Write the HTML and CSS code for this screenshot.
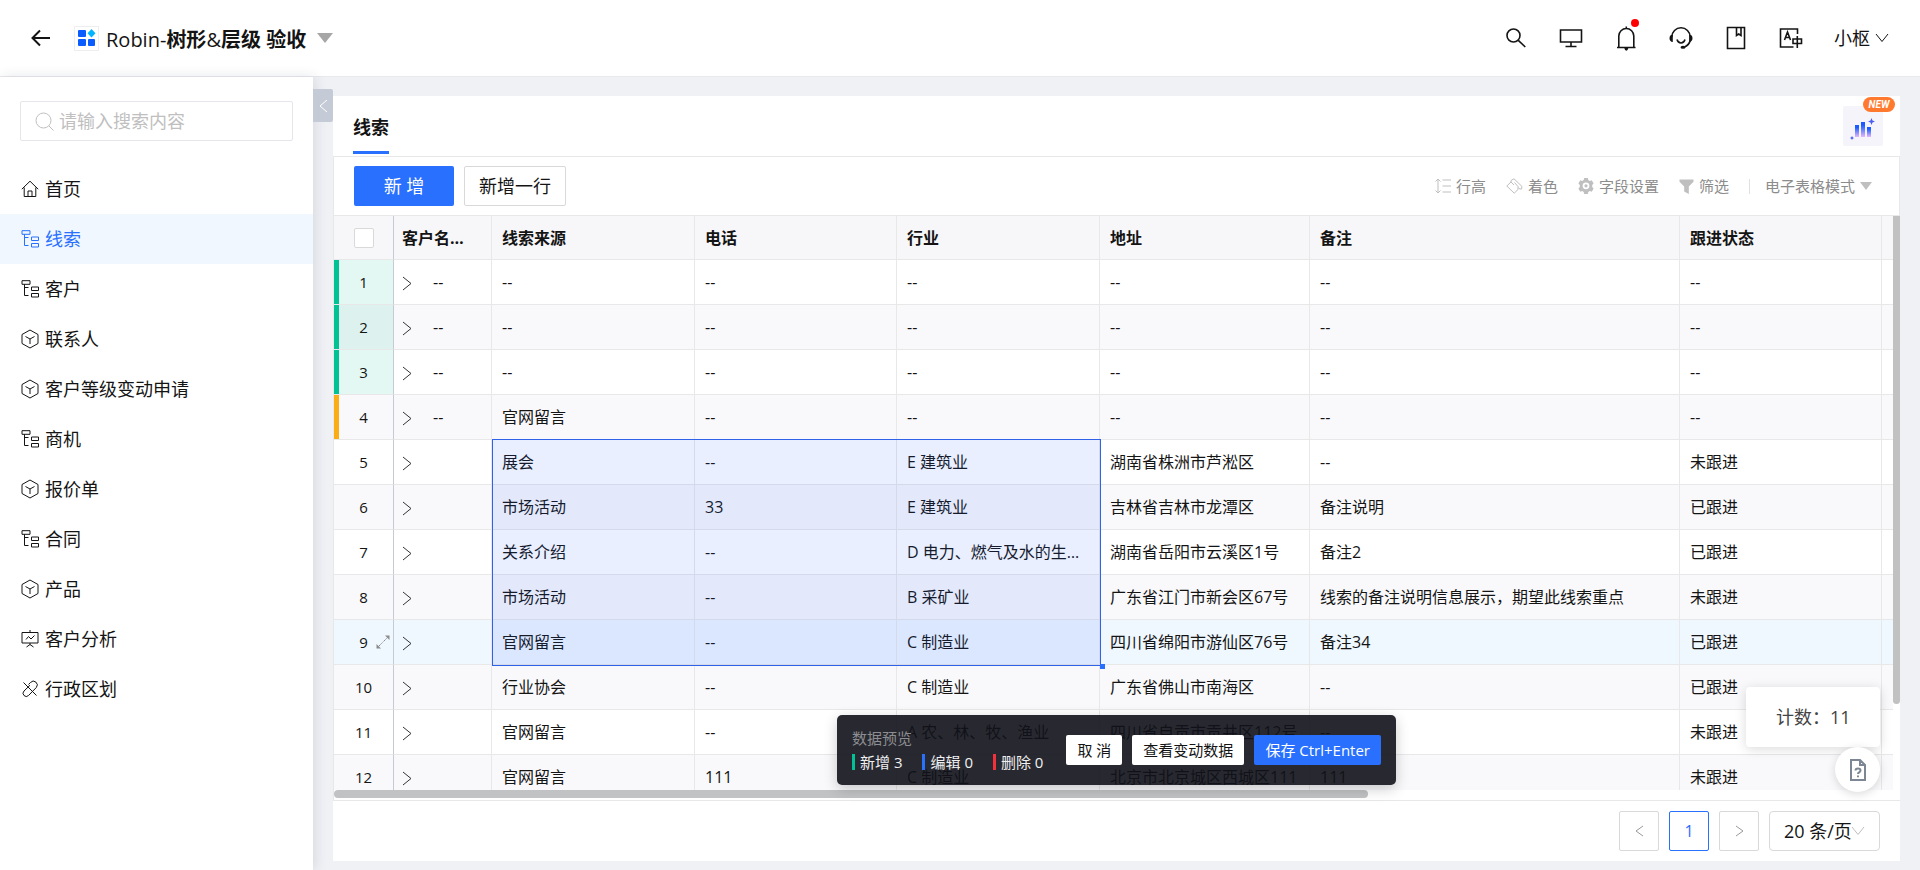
FILE: index.html
```html
<!DOCTYPE html>
<html lang="zh-CN">
<head>
    <meta charset="UTF-8">
    <meta name="viewport" content="width=device-width, initial-scale=1.0">
    <title>Robin-树形&amp;层级 验收</title>
    <link rel="stylesheet" href="styles.css">
</head>
<body>
    <!-- 图标 -->
    <svg class="sprite" aria-hidden="true">
        <symbol id="i-home" viewBox="0 0 18 18"><path d="M.8 9.200 9 1.200l8.200 8M3.200 7.500v9h11.600v-9M7 16.500v-5.500h4v5.500"/></symbol>
        <symbol id="i-tree" viewBox="0 0 18 18"><path d="M1 .7h8v3.600H1zM3.500 4.300v11.200h4M3.500 7.500h4M10.500 7h7v3.500h-7zM10.500 13.500h7V17h-7z"/></symbol>
        <symbol id="i-box" viewBox="0 0 18 20"><path d="M9 1l8 4.500v9L9 19l-8-4.500v-9zM4.500 7.500 9 10l4.500-2.500M9 10v5"/></symbol>
        <symbol id="i-chart" viewBox="0 0 18 18"><path d="M9 0v2M1 2.500h16v10.500H1zM5 9.500l2.500-3 2.500 2.500 3.500-3.500M9 13v1.500M5.500 17l3.500-2.500 3.500 2.500"/></symbol>
        <symbol id="i-link" viewBox="0 0 18 18"><path d="M2.500 2.500l13 13M7.500 4.500l2-2a3.800 3.800 0 0 1 5.800 5L9 14M9 5.200 3 11a3 3 0 0 0 4.500 4.500l2.500-2.500"/></symbol>
        <symbol id="i-right" viewBox="0 0 10 15"><path d="M1 1l8 6.500L1 14"/></symbol>
        <symbol id="i-down" viewBox="0 0 14 10"><path d="M1 1l6 7.500L13 1"/></symbol>
    </svg>

    <header class="header">
        <button class="icon-btn back" aria-label="返回">
            <svg width="20" height="18" viewBox="0 0 20 18"><path stroke-width="2" d="M19 9H1.500M9 1.500 1.500 9 9 16.500"/></svg>
        </button>
        <span class="app-icon">
            <svg width="18" height="18" viewBox="0 0 18 18"><g fill="#0a5cff"><rect x="0" y="1" width="8" height="7" rx="1"/><rect x="0" y="10" width="8" height="7" rx="1"/><rect x="10" y="10" width="7" height="7" rx="1"/></g><path fill="#00b4ff" d="M13.500 0l4 4.200-4 4.200-4-4.200z"/></svg>
        </span>
        <h1 class="title"><span class="latin">Robin-</span>树形<span class="latin">&amp;</span>层级 验收</h1>
        <span class="caret caret-big"></span>

        <nav class="header-tools">
            <button class="icon-btn" aria-label="搜索"><svg width="24" height="24" viewBox="0 0 24 24"><circle class="thick" cx="9.500" cy="9.500" r="6.500"/><path class="thick" d="M14.300 14.300l7 6.700"/></svg></button>
            <button class="icon-btn" aria-label="桌面"><svg width="24" height="24" viewBox="0 0 24 24"><path class="thick" d="M1.500 4h21v12h-21zM12 16v4.500M6.500 20.500h11"/></svg></button>
            <button class="icon-btn bell" aria-label="通知"><svg width="24" height="26" viewBox="0 0 24 26"><path class="thick" d="M3 22.500h18.500M4.800 22v-11a7.500 7.500 0 0 1 15 0v11M12.300 1.500v2"/><path class="solid" d="M10.300 23h4q-.5 2.700-2 2.700t-2-2.700z"/></svg><i class="dot"></i></button>
            <button class="icon-btn" aria-label="客服"><svg width="24" height="24" viewBox="0 0 24 24"><path class="thick" d="M2.800 11a9.200 9.200 0 0 1 18.400 0v3q-.8 5-5.700 7M8 13.500q1 3.500 4 3.500t4-3.500"/><path class="solid" d="M3.800 8.500v7.500Q.5 15.500.5 12.200t3.300-3.700zM20.200 8.500v7.500q3.300-.5 3.300-3.800t-3.300-3.700z"/><ellipse class="solid" cx="14" cy="21.300" rx="2.500" ry="1.500"/></svg></button>
            <button class="icon-btn" aria-label="文档"><svg width="24" height="24" viewBox="0 0 24 24"><path class="thick" d="M3.500 1.500h17v21h-17zM12.500 2v7.500l2.200-1.500 2.300 1.500V2"/></svg></button>
            <button class="icon-btn" aria-label="语言"><svg width="24" height="24" viewBox="0 0 24 24"><path class="thick" d="M18.500 8V3h-17v18h13M5.500 14 8.500 6l3 8M6.500 11.500h4M14 13h8.500v4.500H14zM18.300 10V22"/></svg></button>
            <button class="user">小枢<svg width="14" height="10"><use href="#i-down"/></svg></button>
        </nav>
    </header>

    <div class="body">
        <aside class="sidebar">
            <label class="search">
                <svg width="19" height="19" viewBox="0 0 19 19"><circle cx="8.500" cy="8.500" r="7.500"/><path d="M14 14l4.500 4.500"/></svg>
                <input type="text" placeholder="请输入搜索内容" aria-label="搜索菜单">
            </label>
            <nav class="menu">
                <a href="#"><svg><use href="#i-home"/></svg>首页</a>
                <a href="#" class="active"><svg><use href="#i-tree"/></svg>线索</a>
                <a href="#"><svg><use href="#i-tree"/></svg>客户</a>
                <a href="#"><svg><use href="#i-box"/></svg>联系人</a>
                <a href="#"><svg><use href="#i-box"/></svg>客户等级变动申请</a>
                <a href="#"><svg><use href="#i-tree"/></svg>商机</a>
                <a href="#"><svg><use href="#i-box"/></svg>报价单</a>
                <a href="#"><svg><use href="#i-tree"/></svg>合同</a>
                <a href="#"><svg><use href="#i-box"/></svg>产品</a>
                <a href="#"><svg><use href="#i-chart"/></svg>客户分析</a>
                <a href="#"><svg><use href="#i-link"/></svg>行政区划</a>
            </nav>
            <button class="collapse" aria-label="收起菜单"><svg width="9" height="14" viewBox="0 0 9 14"><path d="M8 1 1 7l7 6"/></svg></button>
        </aside>

        <main class="panel">
            <div class="tabs">
                <a href="#" class="tab">线索</a>
                <button class="ai-btn" aria-label="智能分析">
                    <svg width="26" height="26" viewBox="1 -3 26 26">
                        <defs><linearGradient id="ai" x1="0" y1="0" x2="0" y2="1"><stop offset="0.200" stop-color="#1a5cff"/><stop offset="1" stop-color="#e4b8fa"/></linearGradient></defs>
                        <g fill="url(#ai)"><rect x="6" y="9" width="4" height="12"/><rect x="12" y="6" width="4" height="15"/><rect x="18" y="11" width="4" height="10"/></g>
                        <path fill="#4a5ef5" d="M22.500 2l1 2.500 2.500 1-2.500 1-1 2.500-1-2.500-2.500-1 2.500-1zM3 20l.7 1.300 1.300.7-1.300.7L3 24l-.7-1.300L1 22l1.300-.7z"/>
                    </svg>
                    <span class="badge">NEW</span>
                </button>
            </div>

            <div class="toolbar">
                <button class="btn primary">新 增</button>
                <button class="btn">新增一行</button>
                <div class="tools">
                    <button class="tool"><svg width="16" height="16" viewBox="0 0 16 16"><path d="M3 1v14M.5 3.500 3 1l2.500 2.500M.5 12.500 3 15l2.500-2.500M7.500 2h8.500M7.500 8h8.500M7.500 14h8.500"/></svg>行高</button>
                    <button class="tool"><svg width="17" height="16" viewBox="0 0 17 16"><path d="M5 4V2.500L8 .8l8 7.700-.5 2.500h-2l-1-1.500M5 4 .8 8l7.400 7.200L12 11.500V8.500L8.500 4.500M5 4l3 3"/></svg>着色</button>
                    <button class="tool"><svg width="16" height="16" viewBox="0 0 16 16"><path class="solid" fill-rule="evenodd" d="M6.200 0h3.600l.5 2 1.500.9 2-.6 1.800 3.100-1.400 1.500v2.200l1.400 1.500-1.800 3.100-2-.6-1.500.9-.5 2H6.200l-.5-2-1.500-.9-2 .6L.4 10.600l1.400-1.500V6.900L.4 5.400l1.800-3.100 2 .6 1.500-.9zM8 4.400a3.400 3.400 0 1 0 0 6.800 3.400 3.400 0 0 0 0-6.800z"/><circle class="solid" cx="8" cy="7.800" r="1.600"/></svg>字段设置</button>
                    <button class="tool"><svg width="15" height="15" viewBox="0 0 15 15"><path class="solid" d="M.5.5h14v2.200L9.800 7.500V15l-4.600-2.500v-5L.5 2.700z"/></svg>筛选</button>
                    <span class="divider"></span>
                    <button class="tool">电子表格模式<span class="caret"></span></button>
                </div>
            </div>

            <div class="grid">
                <div class="viewport">
                    <table>
                        <colgroup>
                            <col class="c-index"><col class="c-name"><col class="c-source"><col class="c-phone"><col class="c-source"><col class="c-address"><col><col class="c-phone"><col class="c-rest">
                        </colgroup>
                        <thead>
                            <tr><th><input type="checkbox" aria-label="全选"></th><th>客户名称全称</th><th>线索来源</th><th>电话</th><th>行业</th><th>地址</th><th>备注</th><th>跟进状态</th><th></th></tr>
                        </thead>
                        <tbody>
                            <tr class="added"><td>1</td><td><svg><use href="#i-right"/></svg>--</td><td>--</td><td>--</td><td>--</td><td>--</td><td>--</td><td>--</td><td></td></tr>
                            <tr class="added"><td>2</td><td><svg><use href="#i-right"/></svg>--</td><td>--</td><td>--</td><td>--</td><td>--</td><td>--</td><td>--</td><td></td></tr>
                            <tr class="added"><td>3</td><td><svg><use href="#i-right"/></svg>--</td><td>--</td><td>--</td><td>--</td><td>--</td><td>--</td><td>--</td><td></td></tr>
                            <tr class="edited"><td>4</td><td><svg><use href="#i-right"/></svg>--</td><td>官网留言</td><td>--</td><td>--</td><td>--</td><td>--</td><td>--</td><td></td></tr>
                            <tr><td>5</td><td><svg><use href="#i-right"/></svg></td><td>展会</td><td>--</td><td>E 建筑业</td><td>湖南省株洲市芦淞区</td><td>--</td><td>未跟进</td><td></td></tr>
                            <tr><td>6</td><td><svg><use href="#i-right"/></svg></td><td>市场活动</td><td>33</td><td>E 建筑业</td><td>吉林省吉林市龙潭区</td><td>备注说明</td><td>已跟进</td><td></td></tr>
                            <tr><td>7</td><td><svg><use href="#i-right"/></svg></td><td>关系介绍</td><td>--</td><td>D 电力、燃气及水的生产和供应业</td><td>湖南省岳阳市云溪区1号</td><td>备注2</td><td>已跟进</td><td></td></tr>
                            <tr><td>8</td><td><svg><use href="#i-right"/></svg></td><td>市场活动</td><td>--</td><td>B 采矿业</td><td>广东省江门市新会区67号</td><td>线索的备注说明信息展示，期望此线索重点</td><td>未跟进</td><td></td></tr>
                            <tr class="hover"><td>9<svg class="expand" viewBox="0 0 14 14"><path stroke-dasharray="3 1" d="M7.500 6.500l4-4M2.500 11.500l4-4"/><path class="solid" d="M9 .5h4.500V5zM.5 9v4.500H5z"/></svg></td><td><svg><use href="#i-right"/></svg></td><td>官网留言</td><td>--</td><td>C 制造业</td><td>四川省绵阳市游仙区76号</td><td>备注34</td><td>已跟进</td><td></td></tr>
                            <tr><td>10</td><td><svg><use href="#i-right"/></svg></td><td>行业协会</td><td>--</td><td>C 制造业</td><td>广东省佛山市南海区</td><td>--</td><td>已跟进</td><td></td></tr>
                            <tr><td>11</td><td><svg><use href="#i-right"/></svg></td><td>官网留言</td><td>--</td><td>A 农、林、牧、渔业</td><td>四川省自贡市贡井区112号</td><td>--</td><td>未跟进</td><td></td></tr>
                            <tr><td>12</td><td><svg><use href="#i-right"/></svg></td><td>官网留言</td><td>111</td><td>C 制造业</td><td>北京市北京城区西城区111</td><td>111</td><td>未跟进</td><td></td></tr>
                        </tbody>
                    </table>
                    <div class="selection"></div>
                </div>
                <div class="scroll-y"><div class="thumb"></div></div>
                <div class="scroll-x"><div class="thumb"></div></div>
            </div>

            <footer class="pager">
                <button class="page muted" aria-label="上一页"><svg width="9" height="12" viewBox="0 0 9 12"><path d="M8 1 1 6l7 5"/></svg></button>
                <button class="page current">1</button>
                <button class="page muted" aria-label="下一页"><svg width="9" height="12" viewBox="0 0 9 12"><path d="M1 1l7 5-7 5"/></svg></button>
                <span class="size">
                    <select aria-label="每页条数"><option>20 条/页</option></select>
                    <svg width="14" height="10"><use href="#i-down"/></svg>
                </span>
            </footer>

            <div class="preview">
                <div class="preview-info">
                    <div class="preview-title">数据预览</div>
                    <div class="preview-counts">
                        <span class="green">新增 3</span>
                        <span class="blue">编辑 0</span>
                        <span class="red">删除 0</span>
                    </div>
                </div>
                <button class="small">取 消</button>
                <button class="small">查看变动数据</button>
                <button class="small save">保存 Ctrl+Enter</button>
            </div>

            <div class="count">计数：<span>11</span></div>
            <button class="help" aria-label="帮助文档">
                <svg width="16" height="22" viewBox="0 0 16 22"><path d="M1 1h9l5 5v15H1zM10 1v5h5"/><path d="M5.500 11.500q0-2 2.500-2t2.500 2q0 1.200-1.500 2-1 .5-1 1.500M8 16.500v1.800"/></svg>
            </button>
        </main>
    </div>
</body>
</html>
```
FILE: styles.css
```css
* {
    box-sizing: border-box;
}

body {
    margin: 0;
    min-height: 100vh;
    display: flex;
    flex-direction: column;
    background: #f0f1f5;
    color: #141414;
    font-family: "Open Sans", "Noto Sans CJK SC", sans-serif;
    font-size: 16px;
    line-height: 24px;
}

button,
input,
select {
    font: inherit;
    color: inherit;
}

button {
    padding: 0;
    border: none;
    background: none;
    cursor: pointer;
}

a {
    color: inherit;
    text-decoration: none;
}

svg {
    fill: none;
    stroke: currentColor;
    flex-shrink: 0;
    overflow: visible;
}

.sprite {
    position: absolute;
    width: 0;
    height: 0;
}

.thick {
    stroke-width: 1.6;
}

.solid {
    fill: currentColor;
    stroke: none;
}

.app-icon svg,
.ai-btn svg {
    stroke: none;
}

.caret {
    border: 6px solid transparent;
    border-top: 8px solid #bfbfbf;
    border-bottom: none;
}

.caret-big {
    border-width: 10px 8px 0;
    border-top-color: #a6a6a6;
}

/* 顶部 */
.header {
    height: 77px;
    padding: 0 31px;
    display: flex;
    align-items: center;
    background: #fff;
    border-bottom: 1px solid #e8e9ec;
}

.icon-btn {
    display: flex;
    position: relative;
}

.app-icon {
    width: 25px;
    height: 25px;
    margin: 0 7px 0 23px;
    display: flex;
    align-items: center;
    justify-content: center;
    border: 1px solid #eee;
}

.title {
    margin: 4px 11px 0 0;
    font-size: 20px;
    font-weight: 700;
}

.latin {
    font-weight: 400;
}

.header-tools {
    margin-left: auto;
    display: flex;
    align-items: center;
    gap: 31px;
}

.dot {
    position: absolute;
    top: -6px;
    right: -1px;
    width: 8px;
    height: 8px;
    border-radius: 50%;
    background: #f00;
}

.user {
    display: flex;
    align-items: center;
    gap: 5px;
    font-size: 18px;
}

/* 左侧菜单 */
.body {
    flex: 1;
    display: flex;
}

.sidebar {
    position: relative;
    flex: 0 0 313px;
    min-width: 0;
    background: #fff;
    box-shadow: 2px 0 12px rgba(30, 40, 80, 0.12);
    font-size: 18px;
}

.search {
    height: 40px;
    margin: 24px 20px 23px;
    padding: 0 14px;
    display: flex;
    align-items: center;
    gap: 5px;
    border: 1px solid #e4e6eb;
    border-radius: 2px;
    color: #bfbfbf;
}

.search input {
    flex: 1;
    min-width: 0;
    padding: 0;
    border: none;
    outline: none;
}

.search input::placeholder {
    color: #bfbfbf;
}

.menu a {
    height: 50px;
    padding-left: 21px;
    display: flex;
    align-items: center;
    gap: 6px;
}

.menu svg {
    width: 18px;
    height: 20px;
}

.menu .active {
    background: #f0f7ff;
    color: #2970ff;
}

.collapse {
    position: absolute;
    top: 12px;
    left: 100%;
    width: 20px;
    height: 33px;
    background: #c5cbd6;
    color: #fff;
    border-radius: 0 2px 2px 0;
}

/* 主面板 */
.panel {
    position: relative;
    flex: 1;
    min-width: 0;
    margin: 19px 20px 9px;
    display: flex;
    flex-direction: column;
    background: #fff;
}

.tabs {
    height: 61px;
    padding: 0 17px 0 20px;
    display: flex;
    align-items: center;
    justify-content: space-between;
    border-bottom: 1px solid #e8e8e8;
}

.tab {
    height: 48px;
    margin-top: 8px;
    padding-top: 9px;
    border-bottom: 3px solid #2970ff;
    font-size: 18px;
    font-weight: 700;
}

.ai-btn {
    position: relative;
    width: 40px;
    height: 40px;
    display: flex;
    align-items: center;
    justify-content: center;
    background: #f4f4fa;
    border-radius: 2px;
}

.badge {
    position: absolute;
    top: -9px;
    right: -12px;
    width: 32px;
    border-radius: 8px;
    background: #ff7a2e;
    color: #fff;
    font-family: Roboto, sans-serif;
    font-size: 10px;
    font-style: italic;
    font-weight: 700;
    line-height: 15px;
}

.toolbar {
    height: 59px;
    padding: 0 27px 0 20px;
    display: flex;
    align-items: center;
    gap: 10px;
    border: 1px solid #e8e8e8;
    border-top: none;
}

.btn {
    height: 40px;
    padding: 0 14px;
    border: 1px solid #d9d9d9;
    border-radius: 2px;
    font-size: 18px;
}

.btn.primary {
    width: 100px;
    border: none;
    background: #2970ff;
    color: #fff;
}

.tools {
    margin-left: auto;
    display: flex;
    align-items: center;
    gap: 20px;
    color: #8c8c8c;
    font-size: 15px;
}

.tool {
    display: flex;
    align-items: center;
    gap: 5px;
}

.tool svg {
    color: #bfbfbf;
}

.divider {
    width: 1px;
    height: 15px;
    margin-right: -5px;
    background: #e0e0e0;
}

/* 表格 */
.grid {
    flex: 1;
    display: grid;
    grid-template: 1fr 10px / 1fr 7px;
    border: 1px solid #e8e8e8;
    border-top: none;
    border-right: none;
}

.viewport {
    position: relative;
    min-width: 0;
    height: 0;
    min-height: 100%;
    overflow: hidden;
}

table {
    width: 100%;
    table-layout: fixed;
    border-collapse: separate;
    border-spacing: 0;
}

.c-index {
    width: 60px;
}

.c-name {
    width: 98px;
}

.c-source {
    width: 203px;
}

.c-phone {
    width: 202px;
}

.c-address {
    width: 210px;
}

.c-rest {
    width: 11px;
}

th,
td {
    height: 45px;
    padding: 0 10px;
    border-right: 1px solid #e8e8e8;
    border-bottom: 1px solid #e8e8e8;
    text-align: left;
    white-space: nowrap;
    overflow: hidden;
    text-overflow: ellipsis;
}

th {
    height: 44px;
    background: #f7f7fa;
    font-weight: 700;
}

th:first-child,
td:first-child {
    padding: 0;
    border-right-color: #c4cad6;
    text-align: center;
}

th:nth-child(2),
td:nth-child(2) {
    padding: 0 22px 0 8px;
}

th:last-child,
td:last-child {
    padding: 0;
    border-right: none;
}

th input {
    appearance: none;
    display: block;
    width: 20px;
    height: 20px;
    margin: 0 auto;
    border: 1px solid #d9d9d9;
    border-radius: 2px;
    background: #fff;
}

td svg {
    width: 10px;
    height: 15px;
    margin-right: 21px;
    vertical-align: middle;
    color: #333;
}

td:first-child {
    position: relative;
    font-size: 15px;
}

td .expand {
    position: absolute;
    right: 3px;
    top: 15px;
    width: 14px;
    height: 14px;
    margin: 0;
    color: #8c8c8c;
}

tbody tr:nth-child(even) {
    background: #f9f9fb;
}

tbody tr.hover {
    background: #eff7ff;
}

.added td:first-child {
    background: rgba(0, 191, 145, 0.11);
}

.added td:first-child::before,
.edited td:first-child::before {
    content: "";
    position: absolute;
    top: 0;
    bottom: 0;
    left: 0;
    width: 5px;
    background: #00c295;
}

.edited td:first-child::before {
    background: #faad14;
}

.selection {
    position: absolute;
    left: 158px;
    top: 223px;
    width: 609px;
    height: 227px;
    border: 1px solid #2f62e8;
    background: rgba(41, 98, 255, 0.1);
}

.selection::after {
    content: "";
    position: absolute;
    right: -5px;
    bottom: -4px;
    width: 5px;
    height: 5px;
    background: #2970ff;
}

.scroll-y .thumb {
    width: 7px;
    height: 85%;
    background: #c1c1c1;
    border-radius: 0 0 4px 4px;
}

.scroll-x {
    grid-column: 1 / 3;
}

.scroll-x .thumb {
    width: 66%;
    height: 8px;
    background: #c1c2c3;
    border-radius: 4px;
}

/* 分页 */
.pager {
    height: 60px;
    padding: 0 20px;
    display: flex;
    align-items: center;
    justify-content: flex-end;
    gap: 10px;
}

.page {
    width: 40px;
    height: 40px;
    border: 1px solid #d9d9d9;
    border-radius: 2px;
}

.page.current {
    border-color: #2970ff;
    color: #2970ff;
}

.page.muted {
    color: #999;
}

.size {
    position: relative;
    display: flex;
    font-size: 18px;
}

.size select {
    appearance: none;
    width: 111px;
    height: 40px;
    padding: 0 14px;
    border: 1px solid #d9d9d9;
    border-radius: 4px;
    background: #fff;
}

.size svg {
    position: absolute;
    right: 15px;
    top: 15px;
    color: #bfbfbf;
}

/* 浮层 */
.preview {
    position: absolute;
    left: 0;
    right: 0;
    bottom: 76px;
    width: fit-content;
    height: 70px;
    margin: 0 auto;
    padding: 0 15px;
    display: flex;
    align-items: center;
    gap: 10px;
    border-radius: 5px;
    background: rgba(17, 18, 25, 0.9);
    box-shadow: 0 4px 14px rgba(0, 0, 0, 0.2);
    color: #f0f0f0;
    font-size: 15px;
}

.preview-info {
    margin-right: 13px;
}

.preview-title {
    color: #8c8d91;
}

.preview-counts {
    display: flex;
    gap: 20px;
}

.preview-counts span {
    display: flex;
    align-items: center;
    gap: 5px;
}

.preview-counts span::before {
    content: "";
    width: 3px;
    height: 16px;
    background: #00c295;
}

.preview-counts .blue::before {
    background: #2970ff;
}

.preview-counts .red::before {
    background: #f5303d;
}

.small {
    height: 30px;
    padding: 0 11px;
    border-radius: 2px;
    background: #fff;
    color: #141414;
}

.small.save {
    background: #2970ff;
    color: #fff;
}

.count {
    position: absolute;
    right: 20px;
    bottom: 114px;
    width: 134px;
    height: 60px;
    padding-left: 30px;
    display: flex;
    align-items: center;
    border-radius: 4px;
    background: #fff;
    box-shadow: 0 2px 12px rgba(0, 0, 0, 0.15);
    color: #444;
    font-size: 18px;
}

.help {
    position: absolute;
    right: 20px;
    bottom: 69px;
    width: 45px;
    height: 45px;
    display: flex;
    align-items: center;
    justify-content: center;
    border-radius: 50%;
    background: #fff;
    box-shadow: 0 2px 10px rgba(0, 0, 0, 0.15);
    color: #7d8694;
    stroke-width: 2;
}
```
